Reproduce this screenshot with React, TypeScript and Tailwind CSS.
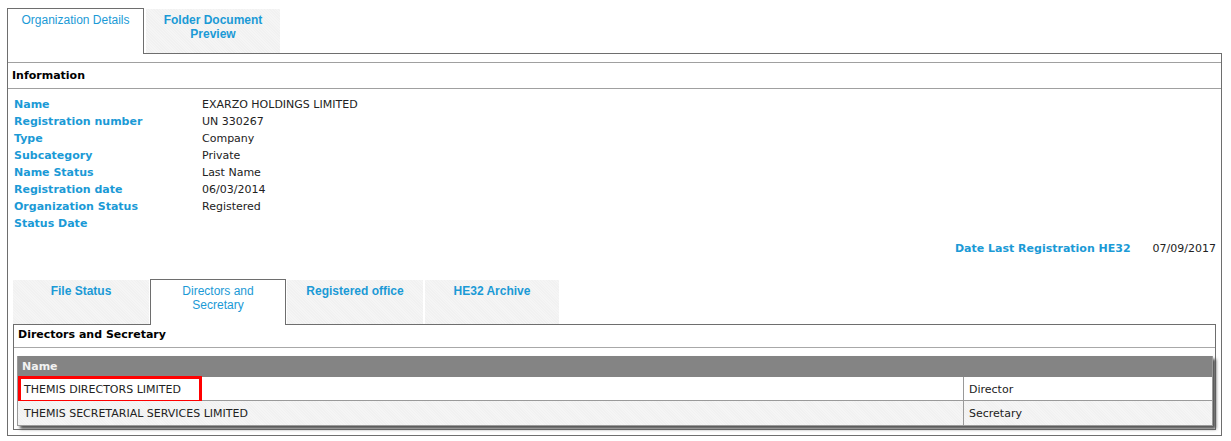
import React from "react";

const INFO = [
  { label: "Name", value: "EXARZO HOLDINGS LIMITED" },
  { label: "Registration number", value: "UN 330267" },
  { label: "Type", value: "Company" },
  { label: "Subcategory", value: "Private" },
  { label: "Name Status", value: "Last Name" },
  { label: "Registration date", value: "06/03/2014" },
  { label: "Organization Status", value: "Registered" },
  { label: "Status Date", value: "" },
];

const DIRECTORS = [
  { name: "THEMIS DIRECTORS LIMITED", role: "Director" },
  { name: "THEMIS SECRETARIAL SERVICES LIMITED", role: "Secretary" },
];

const hatch =
  "bg-[repeating-linear-gradient(45deg,#f1f1f1_0px,#f1f1f1_1px,#f5f5f5_1px,#f5f5f5_2px)]";

function ActiveTab({ lines, width }: { lines: string[]; width: string }) {
  return (
    <div
      className={`${width} h-[46px] shrink-0 border border-b-0 border-[#6e6e6e] bg-white pt-[4px] text-center text-[12px] leading-[14px] text-[#1b9ad6]`}
    >
      {lines.map((l) => (
        <div key={l}>{l}</div>
      ))}
    </div>
  );
}

function InactiveTab({ lines, width }: { lines: string[]; width: string }) {
  return (
    <div
      className={`${width} mt-[1px] h-[44px] shrink-0 ${hatch} pt-[4px] text-center text-[12px] font-bold leading-[14px] text-[#1b9ad6]`}
    >
      {lines.map((l) => (
        <div key={l}>{l}</div>
      ))}
    </div>
  );
}

export default function App() {
  return (
    <div
      className="w-[1231px] h-[441px] bg-white pl-[7px] pr-[9px] pt-[8px]"
      style={{ fontFamily: "'DejaVu Sans', Verdana, sans-serif" }}
    >
      {/* Outer tab strip */}
      <div className="flex" style={{ fontFamily: "'Liberation Sans', Arial, sans-serif" }}>
        <ActiveTab lines={["Organization Details"]} width="w-[137px]" />
        <div className="flex flex-1 border-b border-[#6e6e6e] pl-[2px]">
          <InactiveTab lines={["Folder Document", "Preview"]} width="w-[134px]" />
        </div>
      </div>

      {/* Outer panel */}
      <div className="border border-t-0 border-[#6e6e6e] pt-[8px]">
        <div className="h-[27px] border-y border-[#a0a0a0] pl-[4px] text-[11px] font-bold leading-[25px] text-black">
          Information
        </div>

        <div className="mt-[7px] pl-[6px] text-[11px] leading-[17px]">
          {INFO.map((row) => (
            <div key={row.label} className="flex">
              <div className="w-[188px] font-bold text-[#1b9ad6]">{row.label}</div>
              <div className="text-[#222]">{row.value}</div>
            </div>
          ))}
        </div>

        <div className="mt-[8px] flex justify-end gap-[22px] pr-[5px] text-[11px] leading-[17px]">
          <div className="font-bold text-[#1b9ad6]">Date Last Registration HE32</div>
          <div className="text-[#222]">07/09/2017</div>
        </div>

        {/* Inner tabs */}
        <div className="mx-[5px] mt-[22px]">
          <div className="flex" style={{ fontFamily: "'Liberation Sans', Arial, sans-serif" }}>
            <div className="flex border-b border-[#6e6e6e] pr-[1px]">
              <InactiveTab lines={["File Status"]} width="w-[136px]" />
            </div>
            <ActiveTab lines={["Directors and", "Secretary"]} width="w-[136px]" />
            <div className="flex flex-1 gap-[2px] border-b border-[#6e6e6e] pl-[1px]">
              <InactiveTab lines={["Registered office"]} width="w-[136px]" />
              <InactiveTab lines={["HE32 Archive"]} width="w-[134px]" />
            </div>
          </div>

          <div className="mb-[5px] border border-t-0 border-[#6e6e6e] pb-[3px]">
            <div className="h-[23px] border-b border-[#a8a8a8] pl-[4px] text-[11px] font-bold leading-[20px] text-black">
              Directors and Secretary
            </div>

            <div className="ml-[3px] mr-[2px] mt-[8px] border-x border-b border-[#9a9a9a] text-[11px] shadow-[3px_3px_3px_#555]">
              <div className="h-[21px] bg-[#848484] pl-[4px] font-bold leading-[22px] text-[#f2f2f2]">
                Name
              </div>
              {DIRECTORS.map((d, i) => (
                <div
                  key={d.name}
                  className={`relative flex h-[24px] leading-[25px] text-[#222] ${
                    i === 0 ? "border-b border-[#9a9a9a] bg-white" : hatch
                  }`}
                >
                  <div className="w-[946px] border-r border-[#9a9a9a] pl-[6px]">{d.name}</div>
                  <div className="pl-[5px]">{d.role}</div>
                  {i === 0 && (
                    <div className="absolute left-0 top-[-1px] h-[27px] w-[184px] border-[3px] border-[#ff0000]" />
                  )}
                </div>
              ))}
            </div>
          </div>
        </div>
      </div>
    </div>
  );
}
